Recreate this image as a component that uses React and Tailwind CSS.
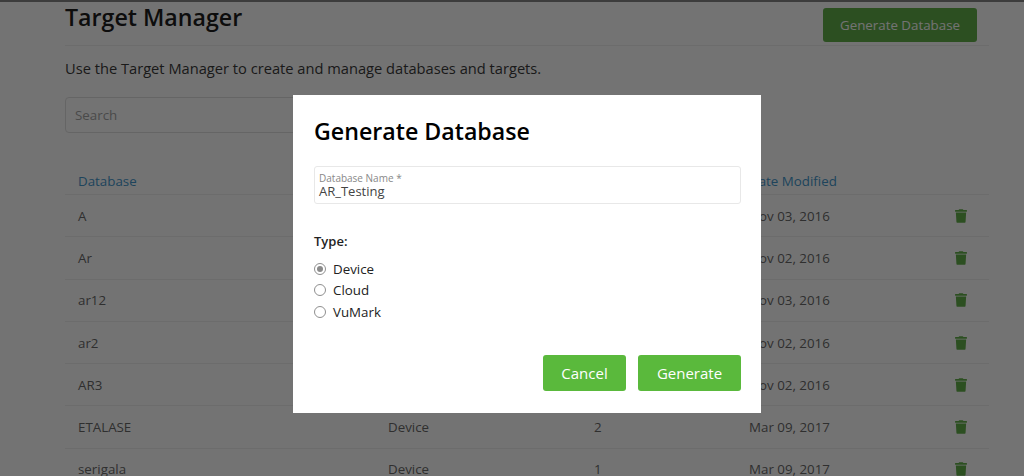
import React from "react";
import { FaTrash } from "react-icons/fa";

const rows = [
  { name: "A", type: "", targets: "", date: "Nov 03, 2016" },
  { name: "Ar", type: "", targets: "", date: "Nov 02, 2016" },
  { name: "ar12", type: "", targets: "", date: "Nov 03, 2016" },
  { name: "ar2", type: "", targets: "", date: "Nov 02, 2016" },
  { name: "AR3", type: "", targets: "", date: "Nov 02, 2016" },
  { name: "ETALASE", type: "Device", targets: "2", date: "Mar 09, 2017" },
  { name: "serigala", type: "Device", targets: "1", date: "Mar 09, 2017" },
];

const types = ["Device", "Cloud", "VuMark"];

const App = () => {
  return (
    <div className="relative h-[476px] w-[1024px] overflow-hidden bg-white font-['Open_Sans',sans-serif] text-[#333]">
      <div className="h-[2px] bg-[#777]" />

      <main className="ml-[65px] mr-[35px]">
        <div className="flex h-[44px] justify-between border-b border-[#eee] pr-[12px]">
          <h1 className="-mt-[1px] text-[23.2px] leading-[32px] font-semibold text-black">
            Target Manager
          </h1>
          <button className="mt-[6px] h-[34px] w-[154px] rounded-[3px] bg-[#4fa534] pt-[2px] text-[13.33px] text-white">
            Generate Database
          </button>
        </div>

        <p className="mt-[11px] text-[14.66px] leading-[22px] text-[#222]">
          Use the Target Manager to create and manage databases and targets.
        </p>

        <div className="mt-[18px] flex h-[36px] w-[400px] items-center rounded-[4px] border border-[#ddd] px-[9px] pt-[2px] text-[13.33px] text-[#999]">
          Search
        </div>

        <div className="mt-[38px] grid h-[24px] grid-cols-[310px_361px_1fr] border-b border-[#eee] pl-[13px] text-[13.33px] leading-[20px] text-[#2b8ac6]">
          <span>Database</span>
          <span />
          <span>Date Modified</span>
        </div>

        {rows.map((row) => (
          <div
            key={row.name}
            className="grid h-[42.3px] grid-cols-[310px_206px_155px_206px_1fr] items-center border-b border-[#eee] pl-[13px] text-[13.33px] text-[#555]"
          >
            <span className="pt-[2px]">{row.name}</span>
            <span className="pt-[2px]">{row.type}</span>
            <span className="pt-[2px]">{row.targets}</span>
            <span className="pt-[2px]">{row.date}</span>
            <FaTrash className="h-[14px] w-[12px] text-[#4fa534]" />
          </div>
        ))}
      </main>

      <div className="absolute inset-0 flex items-start justify-center bg-[#151515]/60 pt-[95px] pl-[30px]">
        <div className="flex h-[318px] w-[468px] flex-col bg-white pr-[20px] pl-[21px] text-[#222]">
          <h2 className="mt-[20px] text-[23.2px] leading-[32px] font-semibold text-black">
            Generate Database
          </h2>

          <div className="mt-[19px] flex h-[38px] flex-col justify-center rounded-[3px] border border-[#e8e8e8] px-[4px]">
            <label className="text-[10px] leading-[12px] text-[#888]">
              Database Name *
            </label>
            <span className="text-[13px] leading-[15px] text-[#444]">
              AR_Testing
            </span>
          </div>

          <div className="mt-[27px] text-[13px] leading-[20px] font-semibold">
            Type:
          </div>

          <div className="mt-[8px] flex flex-col">
            {types.map((type, i) => (
              <label key={type} className="flex h-[21.6px] items-center gap-[7px] text-[13.33px]">
                <span className="-mt-[2px] flex h-[12px] w-[12px] items-center justify-center rounded-full border border-[#8f8f8f] bg-white">
                  {i === 0 && <span className="h-[6px] w-[6px] rounded-full bg-[#8a8a8a]" />}
                </span>
                {type}
              </label>
            ))}
          </div>

          <div className="mt-auto mb-[22px] flex justify-end gap-[12px]">
            <button className="h-[36px] w-[83px] rounded-[3px] bg-[#5ab93c] text-[15px] text-white">
              Cancel
            </button>
            <button className="h-[36px] w-[103px] rounded-[3px] bg-[#5ab93c] text-[15px] text-white">
              Generate
            </button>
          </div>
        </div>
      </div>
    </div>
  );
};

export default App;
